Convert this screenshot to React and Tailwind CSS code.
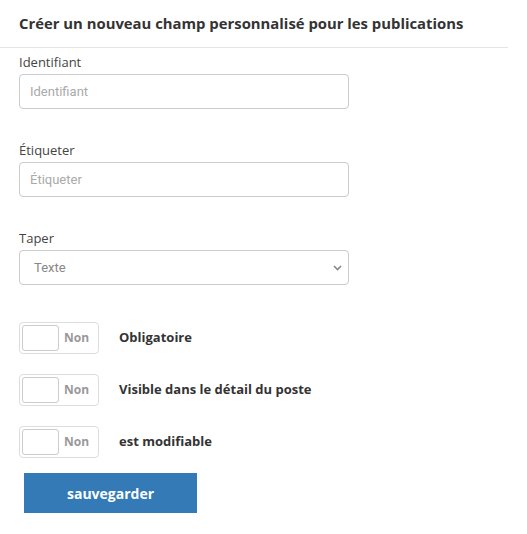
const Toggle = ({ label }) => {
  return (
    <div className="flex items-center h-[32px]">
      <div className="flex items-center w-[80px] h-[32px] border border-[#dddddd] rounded-[4px] p-[2px]">
        <div className="w-[37px] h-[26px] border border-[#cccccc] rounded-[3px] bg-white" />
        <span className="ml-[5px] text-[12px] font-bold text-[#999999]">Non</span>
      </div>
      <span className="ml-[20px] text-[13px] font-bold text-[#333333]">{label}</span>
    </div>
  );
};

const Field = ({ label, children }) => {
  return (
    <div>
      <label className="block text-[13px] leading-[18px] text-[#444444]">{label}</label>
      <div className="mt-[3px]">{children}</div>
    </div>
  );
};

export default function App() {
  return (
    <div className="bg-white min-h-screen w-[527px] h-[534px] font-['Open_Sans',sans-serif]">
      <div className="pr-[19px]">
        <h1 className="pl-[19px] pt-[13px] pb-[13px] text-[14.85px] leading-[21px] font-bold text-[#333333]">
          Créer un nouveau champ personnalisé pour les publications
        </h1>
        <div className="h-px bg-[#e5e5e5]" />
      </div>

      <div className="px-[19px] pt-[5px] flex flex-col">
        <Field label="Identifiant">
          <input
            placeholder="Identifiant"
            className="block w-[330px] h-[35px] border border-[#cccccc] rounded-[4px] px-[10px] text-[13px] font-['Roboto',sans-serif] placeholder:text-[#aaaaaa] outline-none"
          />
        </Field>

        <div className="mt-[32px]">
          <Field label="Étiqueter">
            <input
              placeholder="Étiqueter"
              className="block w-[330px] h-[35px] border border-[#cccccc] rounded-[4px] px-[10px] text-[13px] font-['Roboto',sans-serif] placeholder:text-[#aaaaaa] outline-none"
            />
          </Field>
        </div>

        <div className="mt-[32px]">
          <Field label="Taper">
            <div className="relative w-[330px] h-[35px] border border-[#cccccc] rounded-[4px] flex items-center px-[14px]">
              <span className="text-[13px] text-[#888888] font-['Roboto',sans-serif]">Texte</span>
              <svg
                className="absolute right-[6px] top-[14px]"
                width="9"
                height="6"
                viewBox="0 0 9 6"
                fill="none"
              >
                <path d="M1 1l3.5 3.5L8 1" stroke="#888888" strokeWidth="1.6" />
              </svg>
            </div>
          </Field>
        </div>

        <div className="mt-[37px] flex flex-col gap-[20px]">
          <Toggle label="Obligatoire" />
          <Toggle label="Visible dans le détail du poste" />
          <Toggle label="est modifiable" />
        </div>

        <button className="mt-[15px] ml-[5px] w-[173px] h-[40px] bg-[#337ab7] text-white text-[14px] font-bold">
          sauvegarder
        </button>
      </div>
    </div>
  );
}
